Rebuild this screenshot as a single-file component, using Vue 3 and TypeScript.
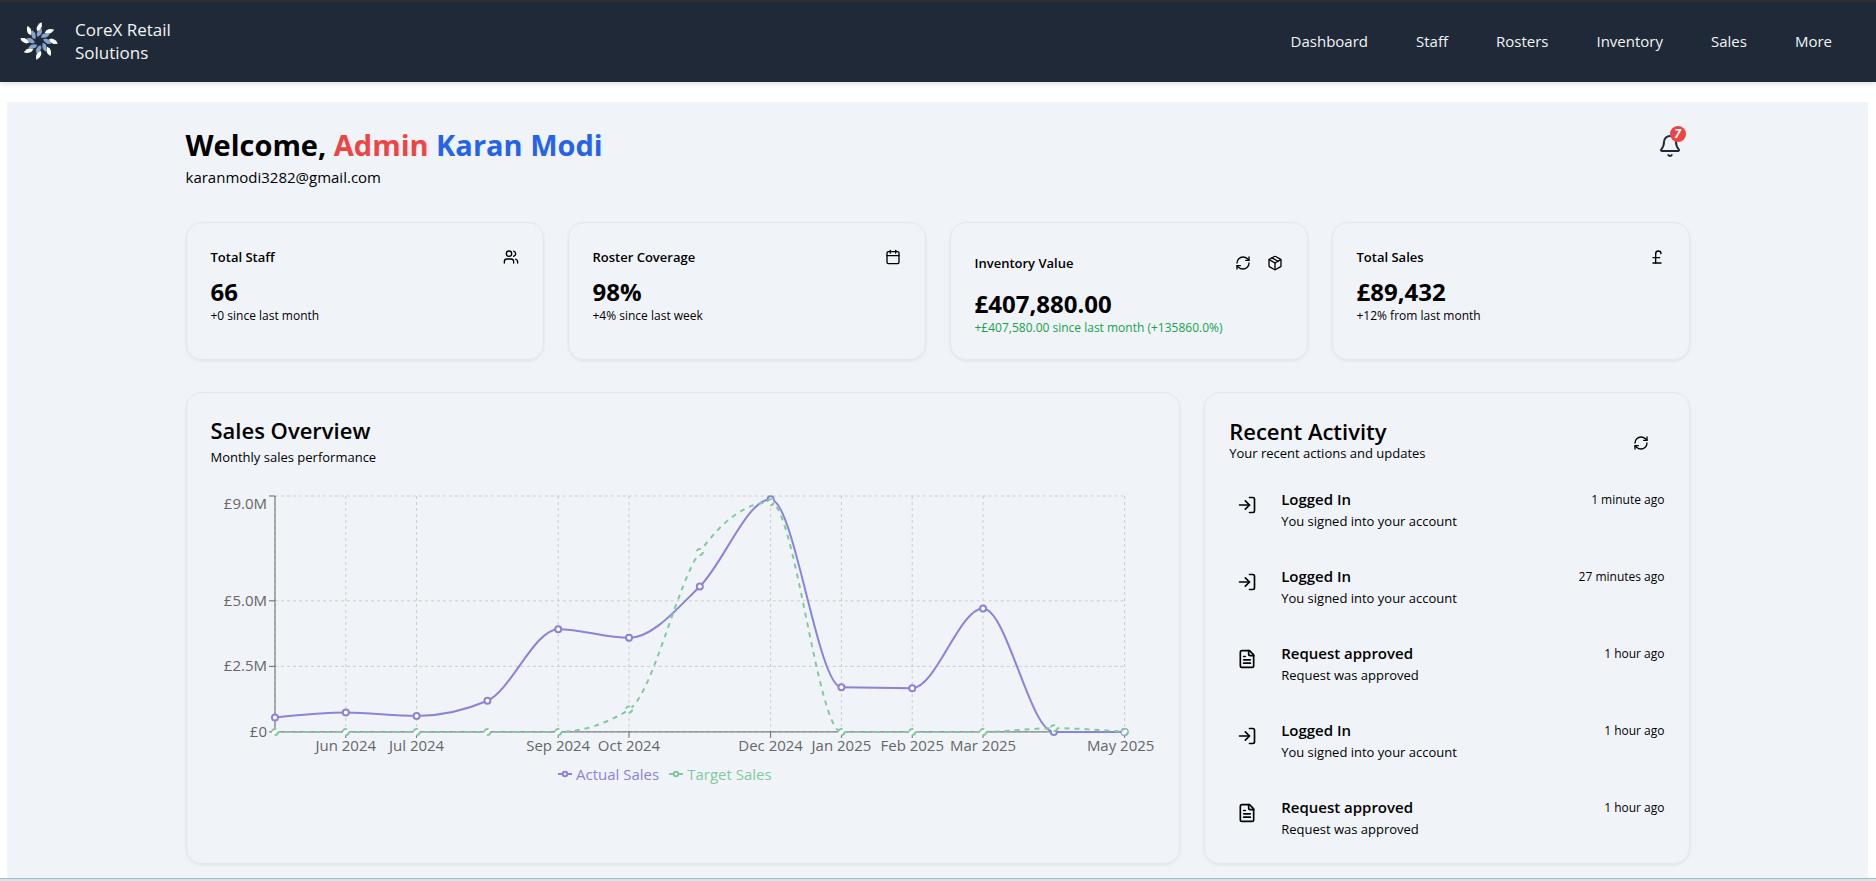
<script setup lang="ts">
import { computed } from 'vue'

interface Stat {
  title: string
  value: string
  note: string
  icon: 'users' | 'calendar' | 'package' | 'pound'
  refreshable?: boolean
  positive?: boolean
}

interface Activity {
  title: string
  detail: string
  time: string
  icon: 'login' | 'file'
}

interface Point {
  x: number
  y: number
}

const navLinks: string[] = ['Dashboard', 'Staff', 'Rosters', 'Inventory', 'Sales', 'More']

const stats: Stat[] = [
  { title: 'Total Staff', value: '66', note: '+0 since last month', icon: 'users' },
  { title: 'Roster Coverage', value: '98%', note: '+4% since last week', icon: 'calendar' },
  {
    title: 'Inventory Value',
    value: '£407,880.00',
    note: '+£407,580.00 since last month (+135860.0%)',
    icon: 'package',
    refreshable: true,
    positive: true,
  },
  { title: 'Total Sales', value: '£89,432', note: '+12% from last month', icon: 'pound' },
]

const activities: Activity[] = [
  { title: 'Logged In', detail: 'You signed into your account', time: '1 minute ago', icon: 'login' },
  { title: 'Logged In', detail: 'You signed into your account', time: '27 minutes ago', icon: 'login' },
  { title: 'Request approved', detail: 'Request was approved', time: '1 hour ago', icon: 'file' },
  { title: 'Logged In', detail: 'You signed into your account', time: '1 hour ago', icon: 'login' },
  { title: 'Request approved', detail: 'Request was approved', time: '1 hour ago', icon: 'file' },
]

const icons: Record<string, string[]> = {
  users: [
    'M16 21v-2a4 4 0 0 0-4-4H6a4 4 0 0 0-4 4v2',
    'M5 7a4 4 0 1 0 8 0a4 4 0 1 0-8 0',
    'M22 21v-2a4 4 0 0 0-3-3.87',
    'M16 3.13a4 4 0 0 1 0 7.75',
  ],
  calendar: ['M8 2v4', 'M16 2v4', 'M5 4h14a2 2 0 0 1 2 2v14a2 2 0 0 1-2 2H5a2 2 0 0 1-2-2V6a2 2 0 0 1 2-2z', 'M3 10h18'],
  package: [
    'm7.5 4.27 9 5.15',
    'M21 8a2 2 0 0 0-1-1.73l-7-4a2 2 0 0 0-2 0l-7 4A2 2 0 0 0 3 8v8a2 2 0 0 0 1 1.73l7 4a2 2 0 0 0 2 0l7-4A2 2 0 0 0 21 16Z',
    'm3.3 7 8.7 5 8.7-5',
    'M12 22V12',
  ],
  pound: ['M18 7c0-5.333-8-5.333-8 0', 'M10 7v14', 'M6 21h12', 'M6 13h10'],
  refresh: [
    'M3 12a9 9 0 0 1 9-9 9.75 9.75 0 0 1 6.74 2.74L21 8',
    'M21 3v5h-5',
    'M21 12a9 9 0 0 1-9 9 9.75 9.75 0 0 1-6.74-2.74L3 16',
    'M8 16H3v5',
  ],
  login: ['M15 3h4a2 2 0 0 1 2 2v14a2 2 0 0 1-2 2h-4', 'm10 17 5-5-5-5', 'M15 12H3'],
  file: [
    'M15 2H6a2 2 0 0 0-2 2v16a2 2 0 0 0 2 2h12a2 2 0 0 0 2-2V7Z',
    'M14 2v4a2 2 0 0 0 2 2h4',
    'M10 9H8',
    'M16 13H8',
    'M16 17H8',
  ],
  bell: [
    'M10.268 21a2 2 0 0 0 3.464 0',
    'M3.262 15.326A1 1 0 0 0 4 17h16a1 1 0 0 0 .74-1.673C19.41 13.956 18 12.499 18 8A6 6 0 0 0 6 8c0 4.499-1.411 5.956-2.738 7.326',
  ],
}

const petalAngles = [0, 45, 90, 135, 180, 225, 270, 315]

/* Chart geometry */
const plot = { left: 64, right: 914, top: 5, bottom: 241, max: 9 }

const months = [
  { label: 'May 2024', shown: false },
  { label: 'Jun 2024', shown: true },
  { label: 'Jul 2024', shown: true },
  { label: 'Aug 2024', shown: false },
  { label: 'Sep 2024', shown: true },
  { label: 'Oct 2024', shown: true },
  { label: 'Nov 2024', shown: false },
  { label: 'Dec 2024', shown: true },
  { label: 'Jan 2025', shown: true },
  { label: 'Feb 2025', shown: true },
  { label: 'Mar 2025', shown: true },
  { label: 'Apr 2025', shown: false },
  { label: 'May 2025', shown: true },
]

const actual = [0.55, 0.74, 0.61, 1.19, 3.92, 3.59, 5.55, 8.88, 1.7, 1.67, 4.71, 0, 0]
const target = [0, 0, 0, 0, 0, 0.85, 6.86, 8.76, 0, 0, 0, 0.14, 0]

const xAt = (i: number): number => plot.left + (i * (plot.right - plot.left)) / (months.length - 1)
const yAt = (v: number): number => plot.bottom - (v * (plot.bottom - plot.top)) / plot.max
const toPoints = (values: number[]): Point[] => values.map((v, i) => ({ x: xAt(i), y: yAt(v) }))

/* Monotone cubic interpolation along x */
function monotonePath(pts: Point[]): string {
  const n = pts.length
  const h: number[] = []
  const s: number[] = []
  for (let i = 0; i < n - 1; i++) {
    h.push(pts[i + 1].x - pts[i].x)
    s.push((pts[i + 1].y - pts[i].y) / h[i])
  }
  const t: number[] = new Array(n).fill(0)
  for (let i = 1; i < n - 1; i++) {
    const p = (s[i - 1] * h[i] + s[i] * h[i - 1]) / (h[i - 1] + h[i])
    t[i] = (Math.sign(s[i - 1]) + Math.sign(s[i])) * Math.min(Math.abs(s[i - 1]), Math.abs(s[i]), 0.5 * Math.abs(p))
  }
  t[0] = (3 * s[0] - t[1]) / 2
  t[n - 1] = (3 * s[n - 2] - t[n - 2]) / 2
  let d = `M${pts[0].x},${pts[0].y}`
  for (let i = 0; i < n - 1; i++) {
    const k = h[i] / 3
    d += `C${pts[i].x + k},${pts[i].y + k * t[i]} ${pts[i + 1].x - k},${pts[i + 1].y - k * t[i + 1]} ${pts[i + 1].x},${pts[i + 1].y}`
  }
  return d
}

const actualPoints = computed(() => toPoints(actual))
const targetPoints = computed(() => toPoints(target))
const xTicks = computed(() => months.map((m, i) => ({ ...m, x: xAt(i) })).filter((m) => m.shown))
const yTicks = [
  { label: '£9.0M', y: yAt(9), textY: yAt(9) + 13 },
  { label: '£5.0M', y: yAt(5), textY: yAt(5) + 5 },
  { label: '£2.5M', y: yAt(2.5), textY: yAt(2.5) + 5 },
  { label: '£0', y: yAt(0), textY: yAt(0) + 5 },
]
</script>

<template>
  <div class="page">
    <header class="topbar">
      <a class="brand" href="#">
        <svg class="logo" viewBox="-20 -20 40 40" aria-hidden="true">
          <g v-for="a in petalAngles" :key="a" :transform="`rotate(${a})`">
            <path class="petal-outer" d="M2.8 -18.8 L2.9 -14.6 Q1.8 -11 -1.6 -9.6 L-2.4 -12.6 Q-1.6 -17 2.8 -18.8 Z" />
            <path class="petal-inner" d="M2.8 -12.4 L2.9 -8.6 Q1.8 -5.4 -1.4 -4 L-2.4 -6.8 Q-1.4 -10.8 2.8 -12.4 Z" />
          </g>
        </svg>
        <span class="brand-name">CoreX Retail<br />Solutions</span>
      </a>
      <nav class="nav" aria-label="Main">
        <a v-for="link in navLinks" :key="link" href="#">{{ link }}</a>
      </nav>
    </header>

    <main class="panel">
      <div class="container">
        <section class="welcome">
          <div>
            <h1>Welcome, <span class="role">Admin</span> <span class="name">Karan Modi</span></h1>
            <p class="email">karanmodi3282@gmail.com</p>
          </div>
          <button class="bell" type="button" aria-label="Notifications">
            <svg class="icon" viewBox="0 0 24 24"><path v-for="d in icons.bell" :key="d" :d="d" /></svg>
            <span class="badge">7</span>
          </button>
        </section>

        <section class="stats">
          <article v-for="s in stats" :key="s.title" class="card stat">
            <div class="stat-head">
              <h2>{{ s.title }}</h2>
              <div class="stat-icons">
                <button v-if="s.refreshable" class="icon-btn" type="button" aria-label="Refresh inventory value">
                  <svg class="icon" viewBox="0 0 24 24"><path v-for="d in icons.refresh" :key="d" :d="d" /></svg>
                </button>
                <svg class="icon" viewBox="0 0 24 24"><path v-for="d in icons[s.icon]" :key="d" :d="d" /></svg>
              </div>
            </div>
            <p class="value">{{ s.value }}</p>
            <p class="note" :class="{ positive: s.positive }">{{ s.note }}</p>
          </article>
        </section>

        <section class="lower">
          <article class="card overview">
            <h2 class="card-title">Sales Overview</h2>
            <p class="card-sub">Monthly sales performance</p>
            <svg class="chart" viewBox="0 0 945 266" role="img" aria-label="Monthly sales performance">
              <g class="grid">
                <line v-for="t in yTicks" :key="t.label" :x1="plot.left" :x2="plot.right" :y1="t.y" :y2="t.y" />
                <line :x1="plot.left" :x2="plot.left" :y1="plot.top" :y2="plot.bottom" />
                <line v-for="t in xTicks" :key="t.label" :x1="t.x" :x2="t.x" :y1="plot.top" :y2="plot.bottom" />
              </g>
              <g class="axis">
                <line :x1="plot.left" :x2="plot.right" :y1="plot.bottom" :y2="plot.bottom" />
                <line :x1="plot.left" :x2="plot.left" :y1="plot.top" :y2="plot.bottom" />
                <line v-for="t in yTicks" :key="t.label" :x1="plot.left - 6" :x2="plot.left" :y1="t.y" :y2="t.y" />
                <line v-for="t in xTicks" :key="t.label" :x1="t.x" :x2="t.x" :y1="plot.bottom" :y2="plot.bottom + 6" />
              </g>
              <g class="tick-text">
                <text v-for="t in yTicks" :key="t.label" :x="plot.left - 8" :y="t.textY" text-anchor="end">{{ t.label }}</text>
                <text
                  v-for="t in xTicks"
                  :key="t.label"
                  :x="t.label === 'May 2025' ? t.x - 4 : t.x"
                  :y="plot.bottom + 19"
                  text-anchor="middle"
                >{{ t.label }}</text>
              </g>
              <g class="series actual">
                <path :d="monotonePath(actualPoints)" />
                <circle v-for="p in actualPoints" :key="p.x" :cx="p.x" :cy="p.y" r="3" />
              </g>
              <g class="series target">
                <path :d="monotonePath(targetPoints)" />
                <circle v-for="p in targetPoints" :key="p.x" :cx="p.x" :cy="p.y" r="3" />
              </g>
            </svg>
            <ul class="legend">
              <li class="legend-actual">
                <svg viewBox="0 0 14 14" aria-hidden="true"><path d="M0 7h4.7M9.3 7H14" /><circle cx="7" cy="7" r="2.3" /></svg>
                Actual Sales
              </li>
              <li class="legend-target">
                <svg viewBox="0 0 14 14" aria-hidden="true"><path d="M0 7h4.7M9.3 7H14" /><circle cx="7" cy="7" r="2.3" /></svg>
                Target Sales
              </li>
            </ul>
          </article>

          <article class="card activity">
            <div class="activity-head">
              <div>
                <h2 class="card-title tight">Recent Activity</h2>
                <p class="card-sub">Your recent actions and updates</p>
              </div>
              <button class="icon-btn wide" type="button" aria-label="Refresh activity">
                <svg class="icon" viewBox="0 0 24 24"><path v-for="d in icons.refresh" :key="d" :d="d" /></svg>
              </button>
            </div>
            <ul class="feed">
              <li v-for="(a, i) in activities" :key="i">
                <svg class="icon feed-icon" viewBox="0 0 24 24"><path v-for="d in icons[a.icon]" :key="d" :d="d" /></svg>
                <div class="feed-body">
                  <h3>{{ a.title }}</h3>
                  <p>{{ a.detail }}</p>
                </div>
                <time>{{ a.time }}</time>
              </li>
            </ul>
          </article>
        </section>
      </div>
    </main>
    <div class="bottom-edge"></div>
  </div>
</template>

<style>
body {
  margin: 0;
  background: #ffffff;
}
</style>

<style scoped>
.page {
  min-height: 100vh;
  display: flex;
  flex-direction: column;
  font-family: 'Segoe UI', 'Open Sans', 'Noto Sans', sans-serif;
  font-size: 16px;
  color: #000000;
}

h1,
h2,
h3,
p,
ul {
  margin: 0;
  padding: 0;
}

ul {
  list-style: none;
}

button {
  border: 0;
  padding: 0;
  background: none;
  color: inherit;
  font: inherit;
  cursor: pointer;
}

.icon {
  display: block;
  width: 16px;
  height: 16px;
  fill: none;
  stroke: currentColor;
  stroke-width: 2;
  stroke-linecap: round;
  stroke-linejoin: round;
}

.topbar {
  display: flex;
  justify-content: space-between;
  align-items: center;
  box-sizing: border-box;
  height: 82px;
  padding: 0 20px 2px 19px;
  border-top: 2px solid #302f33;
  background: #1f2937;
  box-shadow: 0 1px 6px rgba(0, 0, 0, 0.16);
}

.brand {
  display: flex;
  align-items: center;
  gap: 16px;
  color: #f3f4f6;
  text-decoration: none;
}

.logo {
  width: 40px;
  height: 40px;
}

.petal-outer {
  fill: #ffffff;
}

.petal-inner {
  fill: #86a5cb;
}

.brand-name {
  font-size: 17px;
  line-height: 23px;
}

.nav {
  display: flex;
}

.nav a {
  padding: 8px 24px;
  font-size: 15px;
  line-height: 24px;
  font-weight: 500;
  color: #f3f4f6;
  text-decoration: none;
}

.panel {
  flex: 1;
  margin: 20px 8px 0 7px;
  padding: 23px 16px 14px;
  background: #f0f4f9;
}

.container {
  max-width: 1504px;
  margin: 0 auto;
}

.welcome {
  display: flex;
  justify-content: space-between;
  align-items: flex-start;
}

h1 {
  font-size: 29px;
  line-height: 40px;
  font-weight: 700;
}

.role {
  color: #ef4444;
}

.name {
  color: #2563eb;
}

.email {
  font-size: 15px;
  line-height: 25px;
}

.bell {
  position: relative;
  width: 24px;
  height: 24px;
  margin: 9px 8px 0 0;
  color: #1f2937;
}

.bell .icon {
  width: 24px;
  height: 24px;
}

.badge {
  position: absolute;
  top: -8px;
  right: -4px;
  width: 16px;
  height: 16px;
  border-radius: 50%;
  background: #ef4444;
  color: #ffffff;
  font-size: 12px;
  line-height: 16px;
  font-weight: 700;
  font-style: italic;
  text-align: center;
}

.card {
  box-sizing: border-box;
  border: 1px solid #e5e7eb;
  border-radius: 16px;
  padding: 24px 24px 23px;
  box-shadow: 0 1px 3px rgba(0, 0, 0, 0.08);
}

.stats {
  display: grid;
  grid-template-columns: repeat(4, 1fr);
  gap: 24px;
  margin-top: 32px;
}

.stat-head {
  display: flex;
  justify-content: space-between;
  align-items: center;
  margin-bottom: 9px;
}

.stat-head h2 {
  font-size: 13px;
  line-height: 20px;
  font-weight: 600;
}

.stat-icons {
  display: flex;
  align-items: center;
  gap: 8px;
}

.icon-btn {
  display: flex;
  align-items: center;
  justify-content: center;
  width: 32px;
  height: 32px;
}

.icon-btn.wide {
  width: 48px;
}

.value {
  font-size: 24px;
  line-height: 32px;
  font-weight: 700;
}

.note {
  font-size: 12px;
  line-height: 16px;
}

.positive {
  color: #16a34a;
}

.lower {
  display: grid;
  grid-template-columns: repeat(3, 1fr);
  gap: 24px;
  margin-top: 32px;
}

.overview {
  grid-column: span 2;
}

.card-title {
  margin-bottom: 3px;
  font-size: 22px;
  line-height: 27px;
  font-weight: 600;
}

.card-title.tight {
  margin-bottom: 0;
  line-height: 24px;
}

.card-sub {
  font-size: 13px;
  line-height: 20px;
}

.chart {
  display: block;
  width: 100%;
  height: auto;
  margin-top: 24px;
}

.grid line {
  stroke: #cccccc;
  stroke-dasharray: 3 3;
}

.axis line {
  stroke: #666666;
}

.tick-text text {
  font-size: 15px;
  fill: #666666;
}

.series path {
  fill: none;
  stroke-width: 2;
}

.series circle {
  fill: #ffffff;
  stroke-width: 2;
}

.actual {
  stroke: #8884d8;
}

.target {
  stroke: #82ca9d;
  stroke-dasharray: 5 5;
}

.legend {
  display: flex;
  justify-content: center;
  gap: 10px;
  margin: 5px 36px 0 0;
  font-size: 15px;
  line-height: 24px;
}

.legend li {
  display: flex;
  align-items: center;
  gap: 4px;
}

.legend svg {
  width: 14px;
  height: 14px;
  fill: none;
  stroke: currentColor;
  stroke-width: 2;
}

.legend-actual {
  color: #8884d8;
}

.legend-target {
  color: #82ca9d;
}

.activity-head {
  display: flex;
  justify-content: space-between;
  align-items: flex-end;
  padding-top: 2px;
}

.activity-head .icon-btn {
  height: 40px;
}

.feed {
  display: flex;
  flex-direction: column;
  gap: 32px;
  margin-top: 24px;
}

.feed li {
  display: flex;
  align-items: flex-start;
}

.feed-icon {
  width: 20px;
  height: 20px;
  margin: 8px 24px 0 8px;
}

.feed-body {
  flex: 1;
}

.feed-body h3 {
  font-size: 15px;
  line-height: 24px;
  font-weight: 600;
}

.feed-body p {
  font-size: 13px;
  line-height: 21px;
}

.feed time {
  font-size: 12px;
  line-height: 26px;
}

.bottom-edge {
  height: 2px;
  border-top: 1px solid #a9b8c0;
  background: #cfe8ec;
}
</style>
